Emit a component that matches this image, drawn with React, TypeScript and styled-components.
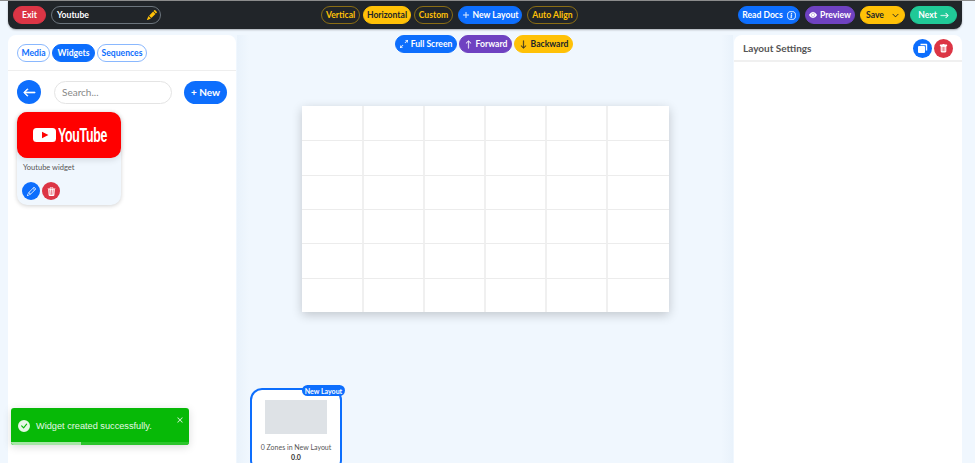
import React from 'react'
import styled, { createGlobalStyle } from 'styled-components'
import {
  BsArrowDown,
  BsArrowLeft,
  BsArrowRight,
  BsArrowUp,
  BsArrowsAngleExpand,
  BsCheckCircleFill,
  BsChevronDown,
  BsEyeFill,
  BsInfoCircle,
  BsPencil,
  BsPencilFill,
  BsPlusLg,
  BsTrash3Fill,
  BsTrashFill,
  BsX,
} from 'react-icons/bs'

const BLUE = '#0d6efd'
const RED = '#dc3545'
const YELLOW = '#ffc107'
const GREEN = '#20c997'
const PURPLE = '#6f42c1'
const FONT = 'Lato, "Noto Sans", sans-serif'

const GlobalStyle = createGlobalStyle`
  html, body {
    margin: 0;
    padding: 0;
    width: 975px;
    height: 463px;
    overflow: hidden;
    background: #f0f7fe;
  }
  * {
    box-sizing: border-box;
  }
  body {
    font-family: ${FONT};
  }
`

const Page = styled.div`
  width: 975px;
  height: 463px;
  padding: 0 13px 0 8px;
  display: flex;
  flex-direction: column;
  gap: 6px;
  border-top: 1px solid #8c8c8c;
  position: relative;
  overflow: hidden;
`

const TopBar = styled.header`
  height: 28px;
  flex: none;
  padding: 0 5px;
  display: flex;
  align-items: center;
  justify-content: space-between;
  background: #212529;
  border-radius: 0 0 8px 8px;
  box-shadow: 0 1px 2px rgba(0, 0, 0, 0.3);
`

const Group = styled.div<{ $gap: number }>`
  display: flex;
  align-items: center;
  gap: ${(p) => p.$gap}px;
`

const Pill = styled.button<{ $bg?: string; $fg?: string; $line?: string; $w: number; $gap?: number }>`
  width: ${(p) => p.$w}px;
  height: 18px;
  padding: 0;
  display: inline-flex;
  align-items: center;
  justify-content: center;
  gap: ${(p) => p.$gap ?? 3}px;
  font: 700 8.6px ${FONT};
  white-space: nowrap;
  border-radius: 9px;
  color: ${(p) => p.$fg ?? '#fff'};
  background: ${(p) => p.$bg ?? 'transparent'};
  border: 1px solid ${(p) => p.$line ?? p.$bg ?? 'transparent'};
  svg {
    stroke: currentColor;
    stroke-width: 0.6px;
  }
`

const NameField = styled.div`
  width: 110px;
  height: 18px;
  padding: 0 3px 0 5px;
  display: flex;
  align-items: center;
  justify-content: space-between;
  border: 1px solid #6c757d;
  border-radius: 9px;
  color: #fff;
  font-size: 8.6px;
  font-weight: 700;
  svg {
    color: ${YELLOW};
  }
`

const Body = styled.main`
  flex: 1;
  min-height: 0;
  display: flex;
  gap: 1px;
`

const SidePanel = styled.section`
  width: 228px;
  flex: none;
  background: #fff;
  border-radius: 8px 8px 0 0;
`

const Center = styled.section`
  flex: 1;
  min-width: 0;
  display: flex;
  flex-direction: column;
  align-items: center;
  overflow: hidden;
  background: linear-gradient(90deg, #e9f2fb 0, #f0f7fe 12px, #f0f7fe calc(100% - 12px), #e9f2fb 100%);
`

const CanvasTools = styled.div`
  flex: none;
  height: 18px;
  padding-right: 2px;
  display: flex;
  gap: 2px;
`

const Canvas = styled.div`
  width: 367px;
  height: 206px;
  margin-top: 53px;
  flex: none;
  display: grid;
  grid-template-columns: repeat(6, 1fr);
  grid-template-rows: repeat(6, 1fr);
  background: #fff;
  box-shadow: 0 3px 10px rgba(0, 0, 0, 0.2);
`

const Cell = styled.div`
  border-left: 1px solid #f0f0f0;
  border-right: 1px solid #f0f0f0;
  border-top: 1px solid #ececec;
  &:nth-child(6n) {
    border-right: 0;
  }
  &:nth-child(6n + 1) {
    border-left: 0;
  }
  &:nth-child(-n + 6) {
    border-top: 0;
  }
`

const ThumbCard = styled.div`
  width: 92px;
  height: 84px;
  margin-top: auto;
  margin-bottom: -9px;
  align-self: flex-start;
  margin-left: 13px;
  flex: none;
  position: relative;
  padding: 10px 0 0;
  display: flex;
  flex-direction: column;
  align-items: center;
  background: #fff;
  border: 2px solid ${BLUE};
  border-radius: 12px;
`

const ThumbBadge = styled.span`
  position: absolute;
  top: -5px;
  right: -5px;
  width: 43px;
  height: 11px;
  display: flex;
  align-items: center;
  justify-content: center;
  background: ${BLUE};
  color: #fff;
  font-size: 7px;
  font-weight: 700;
  white-space: nowrap;
  border-radius: 6px;
`

const ThumbPreview = styled.div`
  width: 62px;
  height: 34px;
  background: #dee2e6;
`

const ThumbTitle = styled.div`
  margin-top: 9px;
  font-size: 7px;
  line-height: 9px;
  color: #555;
  white-space: nowrap;
`

const ThumbRatio = styled.div`
  margin-top: 1px;
  font-size: 7px;
  line-height: 9px;
  font-weight: 700;
  color: #333;
`

const Tabs = styled.div`
  height: 36px;
  padding: 9px 9px 0;
  display: flex;
  gap: 2px;
  border-bottom: 1px solid #eee;
`

const SearchRow = styled.div`
  padding: 9px 9px 0;
  display: flex;
  align-items: center;
`

const RoundButton = styled.button<{ $bg: string; $size: number }>`
  width: ${(p) => p.$size}px;
  height: ${(p) => p.$size}px;
  flex: none;
  padding: 0;
  display: inline-flex;
  align-items: center;
  justify-content: center;
  border: 0;
  border-radius: 50%;
  color: #fff;
  background: ${(p) => p.$bg};
`

const SearchInput = styled.input`
  width: 118px;
  height: 23px;
  margin: 0 12px 0 13px;
  padding: 0 7px;
  font: 10px ${FONT};
  border: 1px solid #e4e4e4;
  border-radius: 12px;
  outline: none;
  &::placeholder {
    color: #888;
  }
`

const NewButton = styled.button`
  width: 44px;
  height: 23px;
  padding: 0;
  font: 700 10px ${FONT};
  color: #fff;
  background: ${BLUE};
  border: 0;
  border-radius: 12px;
`

const WidgetCard = styled.article`
  width: 104px;
  height: 93px;
  margin: 8px 0 0 9px;
  background: #f0f7fe;
  border-radius: 10px;
  box-shadow: 0 1px 4px rgba(0, 0, 0, 0.18);
`

const YoutubeThumb = styled.div`
  height: 46px;
  padding-left: 16px;
  display: flex;
  align-items: center;
  gap: 2px;
  background: #ff0000;
  border-radius: 10px;
  box-shadow: 0 2px 6px rgba(0, 0, 0, 0.12);
`

const YoutubeWord = styled.span`
  display: inline-block;
  width: 48px;
  color: #fff;
  font: 700 20px/1 "Liberation Sans", sans-serif;
  letter-spacing: -0.5px;
  transform: scaleX(0.62);
  transform-origin: left center;
  white-space: nowrap;
`

const WidgetTitle = styled.div`
  margin: 5px 0 0 6px;
  font-size: 7.5px;
  line-height: 10px;
  color: #555;
`

const WidgetActions = styled.div`
  margin: 9px 0 0 5px;
  display: flex;
  gap: 2px;
`

const SettingsHeader = styled.div`
  height: 27px;
  padding: 1px 9px 0;
  display: flex;
  align-items: center;
  justify-content: space-between;
  border-bottom: 2px solid #f0f0f0;
`

const SettingsTitle = styled.h2`
  margin: 0;
  font-size: 10px;
  font-weight: 700;
  color: #555;
`

const Toast = styled.div`
  position: absolute;
  left: 11px;
  top: 407px;
  width: 178px;
  height: 37px;
  padding: 0 0 2px 7px;
  display: flex;
  align-items: center;
  gap: 6px;
  overflow: hidden;
  color: #e6f7e6;
  background: #07b907;
  border-radius: 3px;
  font: 400 9.2px "Liberation Sans", sans-serif;
  box-shadow: 0 2px 8px rgba(0, 0, 0, 0.15);
`

const ToastClose = styled.span`
  position: absolute;
  top: 6px;
  right: 3px;
  display: flex;
`

const ToastTrack = styled.div`
  position: absolute;
  left: 0;
  right: 0;
  bottom: 0;
  height: 3px;
  background: #2cc52c;
`

const ToastProgress = styled.div`
  width: 70px;
  height: 100%;
  background: #a5e6a5;
`

const YoutubeGlyph = () => (
  <svg width="23" height="14" viewBox="0 0 23 14">
    <rect width="23" height="14" rx="3.5" fill="#fff" />
    <path d="M9 3.8 15.4 7 9 10.2z" fill="#f00" />
  </svg>
)

const CopyGlyph = () => (
  <svg width="11" height="11" viewBox="0 0 11 11">
    <path d="M3.5 1.5h6v6" fill="none" stroke="#fff" strokeWidth="1.4" strokeLinejoin="round" />
    <rect x="1" y="3" width="7" height="7" rx="1" fill="#fff" />
  </svg>
)

const cells = Array.from({ length: 36 }, (_, i) => i)

export default function App() {
  return (
    <>
      <GlobalStyle />
      <Page>
        <TopBar>
          <Group $gap={5}>
            <Pill $bg={RED} $w={33}>Exit</Pill>
            <NameField>
              Youtube
              <BsPencilFill size={10} />
            </NameField>
          </Group>
          <Group $gap={5}>
            <Group $gap={3}>
              <Pill $line="#8a6d14" $fg={YELLOW} $w={39}>Vertical</Pill>
              <Pill $bg={YELLOW} $fg="#212529" $w={48}>Horizontal</Pill>
              <Pill $line="#8a6d14" $fg={YELLOW} $w={39}>Custom</Pill>
            </Group>
            <Pill $bg={BLUE} $w={64}>
              <BsPlusLg size={8} />
              New Layout
            </Pill>
            <Pill $line="#8a6d14" $fg={YELLOW} $w={51}>Auto Align</Pill>
          </Group>
          <Group $gap={5}>
            <Pill $bg={BLUE} $w={62} $gap={4}>
              Read Docs
              <BsInfoCircle size={9} />
            </Pill>
            <Pill $bg={PURPLE} $w={50}>
              <BsEyeFill size={8} />
              Preview
            </Pill>
            <Pill $bg={YELLOW} $fg="#212529" $w={45} $gap={8}>
              Save
              <BsChevronDown size={7} />
            </Pill>
            <Pill $bg={GREEN} $w={47}>
              Next
              <BsArrowRight size={9} />
            </Pill>
          </Group>
        </TopBar>
        <Body>
          <SidePanel>
            <Tabs>
              <Pill $line="#8ab8fe" $fg={BLUE} $w={33}>Media</Pill>
              <Pill $bg={BLUE} $w={43}>Widgets</Pill>
              <Pill $line="#8ab8fe" $fg={BLUE} $w={50}>Sequences</Pill>
            </Tabs>
            <SearchRow>
              <RoundButton $bg={BLUE} $size={24}>
                <BsArrowLeft size={13} stroke="currentColor" strokeWidth={1} />
              </RoundButton>
              <SearchInput placeholder="Search..." />
              <NewButton>+ New</NewButton>
            </SearchRow>
            <WidgetCard>
              <YoutubeThumb>
                <YoutubeGlyph />
                <YoutubeWord>YouTube</YoutubeWord>
              </YoutubeThumb>
              <WidgetTitle>Youtube widget</WidgetTitle>
              <WidgetActions>
                <RoundButton $bg={BLUE} $size={18}>
                  <BsPencil size={9} />
                </RoundButton>
                <RoundButton $bg={RED} $size={18}>
                  <BsTrash3Fill size={9} />
                </RoundButton>
              </WidgetActions>
            </WidgetCard>
          </SidePanel>
          <Center>
            <CanvasTools>
              <Pill $bg={BLUE} $w={62}>
                <BsArrowsAngleExpand size={8} />
                Full Screen
              </Pill>
              <Pill $bg={PURPLE} $w={53}>
                <BsArrowUp size={9} />
                Forward
              </Pill>
              <Pill $bg={YELLOW} $fg="#212529" $w={59}>
                <BsArrowDown size={9} />
                Backward
              </Pill>
            </CanvasTools>
            <Canvas>
              {cells.map((i) => (
                <Cell key={i} />
              ))}
            </Canvas>
            <ThumbCard>
              <ThumbBadge>New Layout</ThumbBadge>
              <ThumbPreview />
              <ThumbTitle>0 Zones in New Layout</ThumbTitle>
              <ThumbRatio>0.0</ThumbRatio>
            </ThumbCard>
          </Center>
          <SidePanel>
            <SettingsHeader>
              <SettingsTitle>Layout Settings</SettingsTitle>
              <Group $gap={2}>
                <RoundButton $bg={BLUE} $size={19}>
                  <CopyGlyph />
                </RoundButton>
                <RoundButton $bg={RED} $size={19}>
                  <BsTrashFill size={9} />
                </RoundButton>
              </Group>
            </SettingsHeader>
          </SidePanel>
        </Body>
        <Toast>
          <BsCheckCircleFill size={12} />
          Widget created successfully.
          <ToastClose>
            <BsX size={12} />
          </ToastClose>
          <ToastTrack>
            <ToastProgress />
          </ToastTrack>
        </Toast>
      </Page>
    </>
  )
}
